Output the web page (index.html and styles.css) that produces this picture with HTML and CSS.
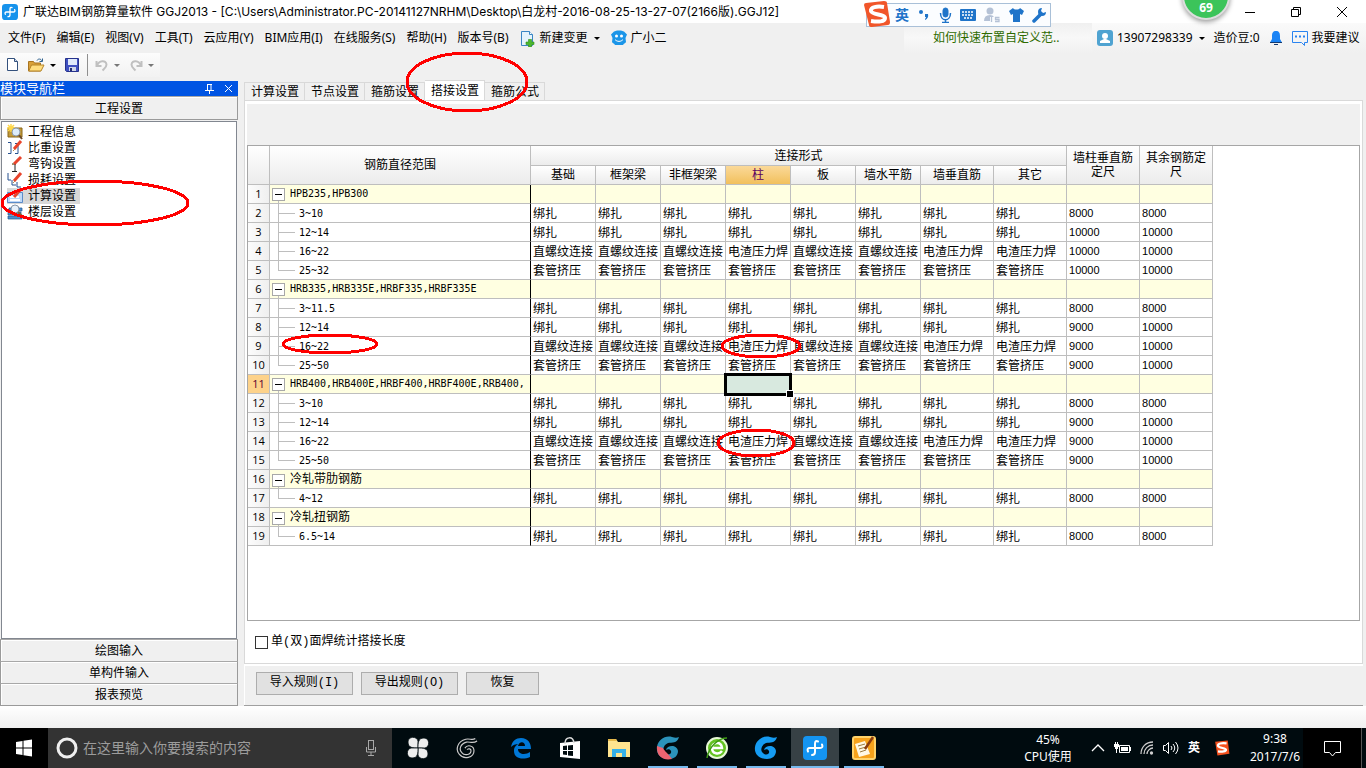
FILE: index.html
```html
<!DOCTYPE html>
<html lang="zh-CN">
<head>
<meta charset="utf-8">
<title>广联达BIM钢筋算量软件 GGJ2013</title>
<link rel="stylesheet" href="styles.css">
</head>
<body>
<header class="titlebar">
  <svg class="app-logo" viewBox="0 0 24 24"><rect width="24" height="24" rx="5" fill="#1793ec"/><g fill="none" stroke="#fff" stroke-width="2" stroke-linecap="round"><path d="M15 5.500Q12 4 12 8v8q0 3-3 3"/><path d="M5 15.500Q3.500 12 7 12h10q3.500 0 2-3.500"/></g></svg>
  <h1 class="window-title">广联达BIM钢筋算量软件 GGJ2013 - [C:\Users\Administrator.PC-20141127NRHM\Desktop\白龙村-2016-08-25-13-27-07(2166版).GGJ12]</h1>
  <div class="window-buttons">
    <button aria-label="最小化"><svg width="12" height="12"><path d="M1 6.500h10" stroke="#000"/></svg></button>
    <button aria-label="还原"><svg width="12" height="12" fill="none" stroke="#000"><path d="M1.500 3.500h7v7h-7zM3.500 3.500v-2h7v7h-2"/></svg></button>
    <button aria-label="关闭"><svg width="12" height="12"><path d="M1 1l10 10M11 1L1 11" stroke="#000"/></svg></button>
  </div>
</header>

<div class="menubar">
  <nav class="menu">
    <button>文件(F)</button><button>编辑(E)</button><button>视图(V)</button><button>工具(T)</button><button>云应用(Y)</button><button>BIM应用(I)</button><button>在线服务(S)</button><button>帮助(H)</button><button>版本号(B)</button>
    <button class="with-icon"><svg width="16" height="17" viewBox="0 0 16 17"><path d="M1.500 1.500h8l3 3v11h-11z" fill="#e4f3fc" stroke="#3a86c4"/><path d="M9.500 1.500v3h3" fill="#fff" stroke="#3a86c4"/><path d="M8.500 9.500h3v2.500h2.500v2.500h-2.500V17h-3v-2.500H6V12h2.500z" fill="#4cb82e" stroke="#2f8f18" stroke-width=".6"/></svg>新建变更<i class="caret"></i></button>
    <button class="with-icon"><svg width="16" height="16" viewBox="0 0 16 16"><path d="M3 1.500c2-1.500 8-1.500 10 0l3 3-1.500 3.500.5 4c0 1-2 1-3 3H4c-1-2-3-2-3-3l.5-4L0 4.500z" fill="#1b95e8"/><circle cx="5.500" cy="6" r="1.500" fill="#fff"/><circle cx="10.500" cy="6" r="1.500" fill="#fff"/><path d="M4 9.500c2 2.500 6 2.500 8 0" fill="none" stroke="#fff"/></svg>广小二</button>
  </nav>
  <a class="tip-link" href="#">如何快速布置自定义范..</a>
  <div class="account">
    <button class="with-icon"><svg width="16" height="16"><rect width="16" height="16" rx="3" fill="#4fa3d1"/><circle cx="8" cy="6" r="3" fill="#fff"/><path d="M3 13v-2l4-2h2l4 2v2z" fill="#fff"/></svg>13907298339<i class="caret"></i></button>
    <span>造价豆:0</span>
    <svg width="14" height="16" viewBox="0 0 14 16"><path d="M7 1c3 0 4 2 4 5v3l2 3.500H1L3 9V6c0-3 1-5 4-5z" fill="#1b84f5"/><path d="M1 12.500h12M5 14.500h4" stroke="#143a70"/></svg>
    <button class="with-icon"><svg width="16" height="17" fill="none" stroke="#2a84f0"><path d="M.5 1.500h15v11h-3v3l-3-3h-9z"/><path d="M3 6.500h10" stroke-width="2" stroke-dasharray="2 2"/></svg>我要建议</button>
  </div>
</div>

<div class="toolbar">
  <div class="tools">
    <button aria-label="新建"><svg width="12" height="16"><path d="M.5 1.500h7l3 3v9H.5z" fill="#fff" stroke="#33507c"/><path d="M7.500 1.500v3h3" fill="#c8d8ee" stroke="#33507c"/></svg></button>
    <button aria-label="打开"><svg width="17" height="16"><path d="M.5 4.500h5l1 1.500h6v8H.5z" fill="#d9a13a" stroke="#a87420"/><path d="M3.500 8h12.500l-3 6H.8z" fill="#ffdd7e" stroke="#b58428"/><path d="M9 3.500c1-2 4-2 5 .5M14.500 1.500v3h-3" fill="none" stroke="#2f6290"/></svg><i class="caret"></i></button>
    <button aria-label="保存"><svg width="15" height="16"><path d="M.5 1.500h13v13h-12l-1-1z" fill="#3f50c0" stroke="#26328c"/><path d="M3 2h9v6H3z" fill="#dfe9fa"/><path d="M4 10h7v4H4z" fill="#cfd6e8"/><path d="M5 11h2v3H5z" fill="#222e70"/></svg></button>
    <span class="divider"></span>
    <button aria-label="撤销" class="dim"><svg width="14" height="14"><path d="M1.500 3v5h5M2 7.500c2-5 9-6 9.500-1 0 3-2 4-4 6" fill="none" stroke="#c0c0c0" stroke-width="2"/></svg><i class="caret"></i></button>
    <button aria-label="重做" class="dim"><svg width="14" height="14"><path d="M12.500 3v5h-5M12 7.500c-2-5-9-6-9.500-1 0 3 2 4 4 6" fill="none" stroke="#c0c0c0" stroke-width="2"/></svg><i class="caret"></i></button>
  </div>
</div>

<div class="workspace">
  <aside class="sidebar">
    <div class="side-title"><span>模块导航栏</span>
      <button aria-label="固定"><svg width="9" height="10" stroke="#fff" fill="none"><path d="M2.500 1v5M6 1v5M2 .5h5M0 6.500h9M4.500 6.500V10"/></svg></button>
      <button aria-label="关闭"><svg width="9" height="9"><path d="M1 1l7 7M8 1L1 8" stroke="#fff"/></svg></button>
    </div>
    <button class="side-section">工程设置</button>
    <ul class="side-list">
      <li><button><svg width="16" height="16"><path d="M1 4h14v9H1z" fill="#c39b38" stroke="#8a671b"/><path d="M4 0v8M0 4h8M1 1l6 6M7 1L1 7" stroke="#ffd84a" stroke-width="1.500"/><circle cx="9" cy="8" r="4" fill="#dcecfa" stroke="#8b98a8"/><path d="M12 11l3 4" stroke="#6b4b28" stroke-width="2"/></svg>工程信息</button></li>
      <li><button><svg width="16" height="16" fill="none"><path d="M1 2.500h3v11H1M8 3.500h3v10H8" stroke="#27518f"/><path d="M7 9l7-8" stroke="#e8442c" stroke-width="3"/><path d="M6 11l2-2" stroke="#b48750"/></svg>比重设置</button></li>
      <li><button><svg width="16" height="16" fill="none"><path d="M8 8v7M5 15.500h5M5 8h4" stroke="#222"/><path d="M7 8l7-7" stroke="#e8442c" stroke-width="3"/><path d="M5 9l2-2" stroke="#b48750"/></svg>弯钩设置</button></li>
      <li><button><svg width="16" height="16" fill="none"><path d="M1 1v7h3M5 8v5h4M10 10v5h4" stroke="#27518f"/><path d="M7 9l7-8" stroke="#e8442c" stroke-width="3"/><path d="M6 11l2-2" stroke="#b48750"/></svg>损耗设置</button></li>
      <li><button class="current"><svg width="16" height="16"><path d="M.5 4.500h15v10H.5z" fill="#bfd9f8" stroke="#5b8cc8"/><path d="M3 9h9M3 12h10" stroke="#fff" stroke-width="2"/><path d="M7 9l7-8" stroke="#e8442c" stroke-width="3"/></svg>计算设置</button></li>
      <li><button><svg width="16" height="16"><path d="M2 4h13v3H2zM1 8h13v3H1zM1 12h14v3H1z" fill="#4a8fd0" stroke="#22588e" stroke-width=".7"/><circle cx="8" cy="5" r="4" fill="#e6f1fb" stroke="#8896a6"/><path d="M11 8l4 4" stroke="#876033" stroke-width="2"/></svg>楼层设置</button></li>
    </ul>
    <button class="side-section">绘图输入</button>
    <button class="side-section">单构件输入</button>
    <button class="side-section">报表预览</button>
  </aside>

  <main class="content">
    <nav class="tabs">
      <button>计算设置</button><button>节点设置</button><button>箍筋设置</button><button class="active">搭接设置</button><button>箍筋公式</button>
    </nav>
    <section class="page">
      <div class="page-head"></div>
      <div class="grid-box">
        <table class="grid">
          <colgroup><col class="c-num"><col class="c-name"><col span="6" class="c-type"><col span="4" class="c-wide"></colgroup>
          <thead>
            <tr><th rowspan="2"></th><th rowspan="2">钢筋直径范围</th><th colspan="8">连接形式</th><th rowspan="2">墙柱垂直筋<br>定尺</th><th rowspan="2">其余钢筋定<br>尺</th></tr>
            <tr><th>基础</th><th>框架梁</th><th>非框架梁</th><th class="hot">柱</th><th>板</th><th>墙水平筋</th><th>墙垂直筋</th><th>其它</th></tr>
          </thead>
          <tbody>
            <tr class="group"><th>1</th><td><button aria-label="折叠"></button>HPB235,HPB300</td><td></td><td></td><td></td><td></td><td></td><td></td><td></td><td></td><td></td><td></td></tr>
            <tr><th>2</th><td>3~10</td><td>绑扎</td><td>绑扎</td><td>绑扎</td><td>绑扎</td><td>绑扎</td><td>绑扎</td><td>绑扎</td><td>绑扎</td><td>8000</td><td>8000</td></tr>
            <tr><th>3</th><td>12~14</td><td>绑扎</td><td>绑扎</td><td>绑扎</td><td>绑扎</td><td>绑扎</td><td>绑扎</td><td>绑扎</td><td>绑扎</td><td>10000</td><td>10000</td></tr>
            <tr><th>4</th><td>16~22</td><td>直螺纹连接</td><td>直螺纹连接</td><td>直螺纹连接</td><td>电渣压力焊</td><td>直螺纹连接</td><td>直螺纹连接</td><td>电渣压力焊</td><td>电渣压力焊</td><td>10000</td><td>10000</td></tr>
            <tr class="last"><th>5</th><td>25~32</td><td>套管挤压</td><td>套管挤压</td><td>套管挤压</td><td>套管挤压</td><td>套管挤压</td><td>套管挤压</td><td>套管挤压</td><td>套管挤压</td><td>10000</td><td>10000</td></tr>
            <tr class="group"><th>6</th><td><button aria-label="折叠"></button>HRB335,HRB335E,HRBF335,HRBF335E</td><td></td><td></td><td></td><td></td><td></td><td></td><td></td><td></td><td></td><td></td></tr>
            <tr><th>7</th><td>3~11.5</td><td>绑扎</td><td>绑扎</td><td>绑扎</td><td>绑扎</td><td>绑扎</td><td>绑扎</td><td>绑扎</td><td>绑扎</td><td>8000</td><td>8000</td></tr>
            <tr><th>8</th><td>12~14</td><td>绑扎</td><td>绑扎</td><td>绑扎</td><td>绑扎</td><td>绑扎</td><td>绑扎</td><td>绑扎</td><td>绑扎</td><td>9000</td><td>10000</td></tr>
            <tr><th>9</th><td>16~22</td><td>直螺纹连接</td><td>直螺纹连接</td><td>直螺纹连接</td><td>电渣压力焊</td><td>直螺纹连接</td><td>直螺纹连接</td><td>电渣压力焊</td><td>电渣压力焊</td><td>9000</td><td>10000</td></tr>
            <tr class="last"><th>10</th><td>25~50</td><td>套管挤压</td><td>套管挤压</td><td>套管挤压</td><td>套管挤压</td><td>套管挤压</td><td>套管挤压</td><td>套管挤压</td><td>套管挤压</td><td>9000</td><td>10000</td></tr>
            <tr class="group"><th class="hot-row">11</th><td><button aria-label="折叠"></button>HRB400,HRB400E,HRBF400,HRBF400E,RRB400,</td><td></td><td></td><td></td><td class="selected"></td><td></td><td></td><td></td><td></td><td></td><td></td></tr>
            <tr><th>12</th><td>3~10</td><td>绑扎</td><td>绑扎</td><td>绑扎</td><td>绑扎</td><td>绑扎</td><td>绑扎</td><td>绑扎</td><td>绑扎</td><td>8000</td><td>8000</td></tr>
            <tr><th>13</th><td>12~14</td><td>绑扎</td><td>绑扎</td><td>绑扎</td><td>绑扎</td><td>绑扎</td><td>绑扎</td><td>绑扎</td><td>绑扎</td><td>9000</td><td>10000</td></tr>
            <tr><th>14</th><td>16~22</td><td>直螺纹连接</td><td>直螺纹连接</td><td>直螺纹连接</td><td>电渣压力焊</td><td>直螺纹连接</td><td>直螺纹连接</td><td>电渣压力焊</td><td>电渣压力焊</td><td>9000</td><td>10000</td></tr>
            <tr class="last"><th>15</th><td>25~50</td><td>套管挤压</td><td>套管挤压</td><td>套管挤压</td><td>套管挤压</td><td>套管挤压</td><td>套管挤压</td><td>套管挤压</td><td>套管挤压</td><td>9000</td><td>10000</td></tr>
            <tr class="group cjk"><th>16</th><td><button aria-label="折叠"></button>冷轧带肋钢筋</td><td></td><td></td><td></td><td></td><td></td><td></td><td></td><td></td><td></td><td></td></tr>
            <tr class="last"><th>17</th><td>4~12</td><td>绑扎</td><td>绑扎</td><td>绑扎</td><td>绑扎</td><td>绑扎</td><td>绑扎</td><td>绑扎</td><td>绑扎</td><td>8000</td><td>8000</td></tr>
            <tr class="group cjk"><th>18</th><td><button aria-label="折叠"></button>冷轧扭钢筋</td><td></td><td></td><td></td><td></td><td></td><td></td><td></td><td></td><td></td><td></td></tr>
            <tr class="last"><th>19</th><td>6.5~14</td><td>绑扎</td><td>绑扎</td><td>绑扎</td><td>绑扎</td><td>绑扎</td><td>绑扎</td><td>绑扎</td><td>绑扎</td><td>8000</td><td>8000</td></tr>
          </tbody>
        </table>
      </div>
      <label class="option"><input type="checkbox">单(双)面焊统计搭接长度</label>
    </section>
    <div class="actions"><button>导入规则(I)</button><button>导出规则(O)</button><button class="short">恢复</button></div>
  </main>
</div>

<div class="status"></div>

<footer class="taskbar">
  <button class="start" aria-label="开始"><svg width="16" height="18" viewBox="0 0 16 18" fill="#fff"><path d="M0 3l6.500-1v6.500H0zM7.500 1.800L16 .5v8H7.500zM0 9.500h6.500V16L0 15zM7.500 9.500H16v8l-8.500-1.300z"/></svg></button>
  <div class="search">
    <svg width="22" height="22"><circle cx="11" cy="11" r="9" fill="none" stroke="#eee" stroke-width="3"/></svg>
    <input type="text" aria-label="搜索" placeholder="在这里输入你要搜索的内容">
    <svg width="12" height="18" fill="none" stroke="#a8a8a8"><rect x="3.500" y="1.500" width="5" height="9"/><path d="M1.500 8v5h9V8M6 13v4M3 16.500h6"/></svg>
  </div>
  <div class="apps">
    <button aria-label="应用"><svg width="24" height="24" viewBox="0 0 24 24" fill="#eee" stroke="#000b0f" stroke-width=".8"><path d="M2 6c0-6 9-6 10-1v7C7 12 2 12 2 6z"/><path d="M18 2c6 0 6 9 1 10h-7C12 7 12 2 18 2z"/><path d="M22 18c0 6-9 6-10 1v-7c5 0 10 0 10 6z"/><path d="M6 22c-6 0-6-9-1-10h7c0 5 0 10-6 10z"/></svg></button>
    <button aria-label="浏览器"><svg width="22" height="22" viewBox="0 0 24 24" fill="none"><path d="M22 3C18 6 15 3 11 4 3 6 1 14 5 18c4 5 13 3 13-3 0-4-5-5-7-2" stroke="#ccc" stroke-width="4.500"/><path d="M22 3C18 6 15 3 11 4 3 6 1 14 5 18c4 5 13 3 13-3 0-4-5-5-7-2" stroke="#000b0f" stroke-width="2"/></svg></button>
    <button class="edge" aria-label="Edge"><svg width="22" height="22" viewBox="0 0 22 22"><path d="M1 10C2 4 6 1 11 1c7 0 10 5 10 11H8c0 6 8 6 12 3v5C13 23 4 22 4 14c0-4 2-6 5-7-4 0-6 1-8 3zM8 9h7c0-5-6-5-7 0z" fill="#0078d7" fill-rule="evenodd"/></svg></button>
    <button aria-label="应用商店"><svg width="22" height="24" viewBox="0 0 22 24"><path d="M1 7l20-2v18L1 21z" fill="#fff"/><path d="M6 8c0-8 8-8 9-1" fill="none" stroke="#ddd" stroke-width="1.500"/><path d="M4 10l4-.5V14H4zM9 9.500l5-.5v5H9zM4 15h4v4l-4-.5zM9 15h5v5l-5-.5z" fill="#000b0f"/></svg></button>
    <button aria-label="文件资源管理器"><svg width="22" height="20"><path d="M0 1h8l2 3h12v15H0z" fill="#ffe48f"/><path d="M0 1h8l1 2H0z" fill="#e6b94b"/><path d="M4 19v-8h14v8h-4v-4H8v4z" fill="#36b0e8"/></svg></button>
    <button class="open" aria-label="广联达"><svg width="24" height="24" viewBox="0 0 24 24"><path d="M23 1C21 8 16 6 12 7c-5 2-6 8-3 10 3 3 7 1 6-2-1-2-3-2-5-1 1-5 11-6 12 1 0 5-4 8-9 8C5 23 0 18 1 11 2 4 9-1 16 1c3 1 5 1 7 0z" fill="#2b93bb"/><path d="M1 10l6 2c2 4 5 5 9 11C8 25 0 21 1 10z" fill="#ed6470"/></svg></button>
    <button class="open" aria-label="安全浏览器"><svg width="24" height="24"><circle cx="12" cy="12" r="10" fill="#64c322" stroke="#e8f9d8" stroke-width="2"/><path d="M17 15c-3 4-10 3-10-3s10-7 10 0H7" fill="none" stroke="#fff" stroke-width="2.500"/><path d="M2 22C4 10 14 2 22 2" fill="none" stroke="#3c9914" stroke-width="1.500"/></svg></button>
    <button class="open" aria-label="广联达服务"><svg width="24" height="24" viewBox="0 0 24 24"><path d="M23 1C21 8 16 6 12 7c-5 2-6 8-3 10 3 3 7 1 6-2-1-2-3-2-5-1 1-5 11-6 12 1 0 5-4 8-9 8C5 23 0 18 1 11 2 4 9-1 16 1c3 1 5 1 7 0z" fill="#159cf2"/></svg></button>
    <button class="open current" aria-label="广联达BIM钢筋算量软件"><svg width="24" height="24"><rect width="24" height="24" rx="4" fill="#1494f1"/><g fill="none" stroke="#fff" stroke-width="2" stroke-linecap="round"><path d="M15 5.500Q12 4 12 8v8q0 3-3 3"/><path d="M5 15.500Q3.500 12 7 12h10q3.500 0 2-3.500"/></g></svg></button>
    <button class="open" aria-label="便笺"><svg width="24" height="24"><rect x="1" y="1" width="22" height="22" rx="2" fill="#f6a21b" stroke="#ffd36a" stroke-width="2"/><path d="M3 8l10-3 5 13-11 3z" fill="#fff8e4"/><path d="M6 10l7-2M7 13l7-2M8 16l6-2" stroke="#9a7a40"/><path d="M13 13l8-12" stroke="#8a3c10" stroke-width="2.500"/></svg></button>
  </div>
  <div class="cpu"><span>45%</span><span>CPU使用</span></div>
  <div class="tray">
    <svg width="14" height="10"><path d="M1 8l6-6 6 6" fill="none" stroke="#fff" stroke-width="1.300"/></svg>
    <svg width="17" height="12"><path d="M5.500 3.500h10v7h-10z" fill="none" stroke="#fff"/><path d="M7 5h7v4H7zM16 5h1v4h-1zM0 2h5v3H4v2H1V5H0zM1 0h1v2H1zM3 0h1v2H3zM2 7h1v4H2z" fill="#fff"/></svg>
    <svg width="14" height="14" fill="none" stroke="#ccc" stroke-width="1.300"><path d="M1 13C1 6 6 1 13 1M4 13c0-5 4-9 9-9M7 13c0-3 3-6 6-6"/><circle cx="11.500" cy="12" r="1" fill="#fff"/></svg>
    <svg width="16" height="14" fill="none" stroke="#fff"><path d="M.5 4.500h2l3-3v11l-3-3h-2zM8 5q2 2 0 4M10 3q3.500 4 0 8M12.500 1q5 6 0 12"/></svg>
    <b>英</b>
    <svg class="tray-ime" width="16" height="16" viewBox="0 0 28 28"><path d="M2 3l22-2 3 23-21 3z" fill="#f4511e"/><path d="M22 6C14 5 6 6 7 10s14 4 14 7-7 4-14 3" fill="none" stroke="#fff" stroke-width="4"/></svg>
  </div>
  <div class="clock"><time>9:38</time><time>2017/7/6</time></div>
  <button class="notice" aria-label="通知"><svg width="17" height="17"><path d="M.5 1.500h16v11h-5L8.500 16l-3-3.500h-5z" fill="none" stroke="#fff"/></svg></button>
</footer>

<div class="ime">
  <svg class="ime-logo" width="28" height="28"><path d="M1 5q0-2 2-2l18-2q3 0 3 2l3 19q0 3-2 3L9 27q-3 0-3-2z" fill="#f1562a"/><path d="M21 7C14 6 7 7 8 11s14 3 14 7-7 4-14 3" fill="none" stroke="#fff" stroke-width="4"/></svg>
  <b>英</b>
  <svg width="14" height="14" fill="#1f74c9"><circle cx="4" cy="4" r="2"/><path d="M8 6h3q1 4-3 6V11q1-1 1-2H8z"/></svg>
  <svg width="13" height="16" fill="none" stroke="#1f74c9"><rect x="4" y="1" width="5" height="9" rx="2.500" fill="#1f74c9"/><path d="M1.500 6c0 9 10 9 10 0M6.500 12v4M3 15.500h7" stroke-width="1.500"/></svg>
  <svg width="16" height="12"><rect width="16" height="12" rx="1" fill="#1f74c9"/><path d="M2 3h12M2 6h12M4 9h8" stroke="#fff" stroke-width="1.500" stroke-dasharray="2 1"/></svg>
  <svg width="17" height="16" fill="#b5c2d6"><circle cx="6" cy="4" r="3.500"/><path d="M0 14q0-6 6-6 3 0 4 2H6v4z"/><path d="M7.500 10v5M15.500 10.500h-4v2h3.500v2h-4" fill="none" stroke="#b5c2d6" stroke-width="1.300"/></svg>
  <svg width="15" height="14"><path d="M0 3l4-3c1 2 6 2 7 0l4 3-2 4-2-1v8H4V6L2 7z" fill="#1f74c9"/></svg>
  <svg width="15" height="15"><path d="M2 13l7-7" stroke="#1f74c9" stroke-width="3.500" stroke-linecap="round"/><path d="M14 4a4 4 0 1 1-4-4L9 3l2 2z" fill="#1f74c9"/></svg>
</div>
<div class="ball">69</div>

<svg class="marks" width="900" height="480" aria-hidden="true">
  <ellipse cx="467" cy="82" rx="60" ry="29"/>
  <ellipse cx="95" cy="203" rx="93" ry="22"/>
  <ellipse cx="330" cy="344" rx="47" ry="9"/>
  <ellipse cx="761" cy="346" rx="39" ry="11"/>
  <ellipse cx="756" cy="443" rx="38" ry="13"/>
</svg>
</body>
</html>
```
FILE: styles.css
```css
* { box-sizing: border-box; }
body {
  margin: 0;
  min-height: 100vh;
  display: flex;
  flex-direction: column;
  position: relative;
  overflow-x: hidden;
  background: #f0f0f0;
  color: #000;
  font: 12px/16px "Noto Sans", "Noto Sans CJK SC", sans-serif;
}
button, input { font: inherit; color: inherit; }
button { margin: 0; padding: 0; border: 0; background: none; white-space: nowrap; }
svg { flex: none; display: block; }

.titlebar { height: 23px; display: flex; align-items: center; background: #fff; padding: 0 1px 0 2px; }
.app-logo { width: 16px; height: 16px; }
.window-title { margin: 0 auto 0 5px; font-family: Inter, "Noto Sans CJK SC", sans-serif; font-size: 12px; font-weight: 400; white-space: nowrap; }
.window-buttons { display: flex; }
.window-buttons button { width: 46px; height: 22px; display: flex; align-items: center; justify-content: center; }

.menubar { height: 30px; display: flex; align-items: stretch; white-space: nowrap; }
.menu { display: flex; align-items: center; gap: 11px; padding-left: 8px; margin-right: auto; }
.with-icon { display: flex; align-items: center; gap: 4px; }
.caret { border: 3px solid transparent; border-top-color: #000; border-bottom: 0; margin-left: 2px; }
.tip-link {
  width: 188px;
  padding-left: 29px;
  line-height: 30px;
  color: #2f6b00;
  text-decoration: none;
  background: linear-gradient(#f0f0f0, #f8f8f8 50%, #f0f0f0);
}
.account { width: 274px; display: flex; align-items: center; gap: 9px; padding-left: 5px; background: linear-gradient(#fafafa, #f0f0f0); }

.toolbar { height: 27px; }
.tools { width: 160px; height: 24px; display: flex; align-items: center; gap: 9px; padding-left: 7px; background: linear-gradient(#fcfcfc, #f2f2f2); }
.tools button { display: flex; align-items: center; gap: 3px; }
.divider { width: 1px; height: 22px; margin: 0 -2px; background: #8f8f8f; }
.dim .caret { border-top-color: #777; }

.workspace { flex: 1; display: flex; }
.sidebar { width: 239px; display: flex; flex-direction: column; padding: 1px 1px 0 0; }
.side-title { height: 15px; display: flex; align-items: center; gap: 10px; padding-right: 5px; background: #0054e3; color: #fff; line-height: 15px; }
.side-title span { margin-right: auto; font-size: 13px; }
.side-section { height: 22px; border: 1px solid #9a9a9a; border-top-color: #a8a8a8; border-bottom-width: 0; background: #f0f0f0; box-shadow: inset 1px 1px #fff; }
.side-title + .side-section { height: 24px; padding-top: 2px; border-bottom-width: 1px; }
.side-section:last-child { height: 23px; border-bottom-width: 1px; }
.side-list { flex: 1; margin: 1px 1px 0; padding: 2px 5px; list-style: none; background: #fff; border: 1px solid #828790; }
.side-list li { height: 16px; }
.side-list button { height: 16px; display: flex; align-items: center; gap: 5px; line-height: 16px; }
.side-list .current { padding-right: 4px; background: linear-gradient(#d8d8d8, #d8d8d8); }

.content { flex: 1; min-width: 0; margin-left: 5px; padding-right: 3px; display: flex; flex-direction: column; }
.tabs { display: flex; align-items: flex-end; height: 20px; }
.tabs button { height: 18px; padding: 0 5px 0 6px; border: 1px solid #d9d9d9; border-width: 1px 1px 0 0; line-height: 17px; }
.tabs button:first-child { border-left-width: 1px; }
.tabs .active { height: 21px; margin-bottom: -1px; background: #fff; line-height: 18px; }
.page { flex: 1; display: flex; flex-direction: column; padding: 3px 2px 0; background: #fff; border: 1px solid #d9d9d9; }
.page-head { height: 41px; background: #f0f0f0; }
.grid-box { flex: 1; border: 1px solid #a6a6a6; background: #fff; }
.option { height: 42px; display: flex; align-items: center; gap: 3px; padding-left: 8px; font-family: "Liberation Mono", "Noto Sans CJK SC", monospace; }
.option input { appearance: none; width: 13px; height: 13px; margin: 0; border: 1px solid #333; background: #fff; }
.actions { height: 42px; display: flex; align-items: center; gap: 8px; padding: 0 12px 3px; border-bottom: 1px solid #a0a0a0; box-shadow: inset 1px 2px #fff; font-family: "Liberation Mono", "Noto Sans CJK SC", monospace; }
.actions button { width: 97px; height: 23px; border: 1px solid #adadad; background: #e1e1e1; }
.actions .short { width: 73px; }

.grid { table-layout: fixed; width: 965px; border-collapse: separate; border-spacing: 0; font-family: "Liberation Sans", "Noto Sans CJK SC", sans-serif; line-height: 14px; }
.c-num { width: 22px; }
.c-name { width: 261px; }
.c-type { width: 65px; }
.c-wide { width: 73px; }
.grid th, .grid td { height: 19px; padding: 0; border: 1px solid #bebebe; border-width: 0 1px 1px 0; white-space: nowrap; overflow: hidden; }
.grid th { font-weight: 400; background: linear-gradient(#fff, #ececec); }
.grid thead tr:first-child th { height: 20px; }
.grid thead .hot { background: linear-gradient(#fbd999, #f2c05c); color: #5a0060; }
.grid tbody th { font-family: "Open Sans", sans-serif; font-size: 11px; background: linear-gradient(90deg, #fcfcfc, #efefef); }
.grid tbody .hot-row { background: #fdd28a; color: #5a0030; }
.grid td { padding: 1px 0 0 2px; }
.grid td:nth-last-child(-n+2) { padding-top: 0; font-size: 11px; }
.grid td:nth-child(2) {
  padding: 2px 0 0 29px;
  border-right-color: #000;
  font: 10px/14px "DejaVu Sans Mono", monospace;
  background: linear-gradient(#bebebe, #bebebe) 8px 0 / 1px 100% no-repeat, linear-gradient(#bebebe, #bebebe) 8px 9px / 17px 1px no-repeat;
}
.grid .last td:nth-child(2) { background-size: 1px 9px, 17px 1px; }
.grid .group td { background: #ffffe1; }
.grid .group td:nth-child(2) { padding: 0 0 0 2px; background: linear-gradient(#bebebe, #bebebe) 8px 16px / 1px 3px no-repeat #ffffe1; }
.grid .cjk td:nth-child(2) { font: 12px/14px "Noto Sans CJK SC", sans-serif; }
.grid td button { width: 13px; height: 13px; margin-right: 5px; vertical-align: middle; border: 1px solid #a8a8a8; background: linear-gradient(#000, #000) 2px 5px / 7px 1px no-repeat #fff; }
.grid .group .selected { position: relative; overflow: visible; background: #d8e9df; }
.selected::after { content: ""; position: absolute; inset: -2px -2px -3px; border: 3px solid #000; }
.selected::before { content: ""; position: absolute; z-index: 1; right: -4px; bottom: -5px; width: 6px; height: 6px; background: #000; border: 1px solid #fff; }

.status { height: 22px; background: linear-gradient(#fff, #f0f0f0); }

.taskbar { height: 40px; display: flex; align-items: stretch; background: #000b0f; color: #fff; white-space: nowrap; }
.start { width: 48px; display: flex; align-items: center; justify-content: center; background: #000; }
.search { width: 344px; display: flex; align-items: center; gap: 5px; padding: 0 15px 0 8px; background: #333; }
.search input { flex: 1; min-width: 0; padding: 0; border: 0; outline: 0; background: none; font-size: 14px; }
.search input::placeholder { color: #9c9c9c; }
.apps { display: flex; margin: 0 auto 0 2px; gap: 1px; }
.apps button { width: 48px; display: flex; align-items: center; justify-content: center; }
.apps .edge { margin-left: 5px; }
.apps .open { background: linear-gradient(#76b9ed, #76b9ed) center bottom / 40px 2px no-repeat; }
.apps .current { background: linear-gradient(#76b9ed, #76b9ed) center bottom / 48px 2px no-repeat #374145; }
.cpu, .clock { display: flex; flex-direction: column; align-items: center; justify-content: center; line-height: 17px; }
.cpu { width: 64px; margin-right: 10px; }
.tray { width: 157px; display: flex; align-items: center; gap: 9px; padding-left: 1px; }
.tray-ime { margin-left: 5px; }
.clock { width: 56px; line-height: 18px; }
.notice { width: 59px; margin-right: 4px; border-right: 1px solid #555; background: #000; display: flex; align-items: center; justify-content: center; }

.ime { position: absolute; top: 3px; right: 315px; height: 24px; display: flex; align-items: center; gap: 8px; padding: 0 3px 0 28px; background: #fbfdff; border: 1px solid #a9c0d8; color: #1f74c9; font-size: 14px; }
.ime-logo { position: absolute; left: -4px; top: -4px; }
.ball { position: absolute; top: -28px; right: 136px; width: 48px; height: 48px; padding-top: 26px; border: 2px solid #ddd; border-radius: 50%; background: #3cc45a; box-shadow: 0 2px 5px rgba(0, 0, 0, .4); color: #fff; font-weight: 700; text-align: center; }
.marks { position: absolute; left: 0; top: 0; pointer-events: none; fill: none; stroke: #f00; stroke-width: 3; shape-rendering: crispEdges; }
```
